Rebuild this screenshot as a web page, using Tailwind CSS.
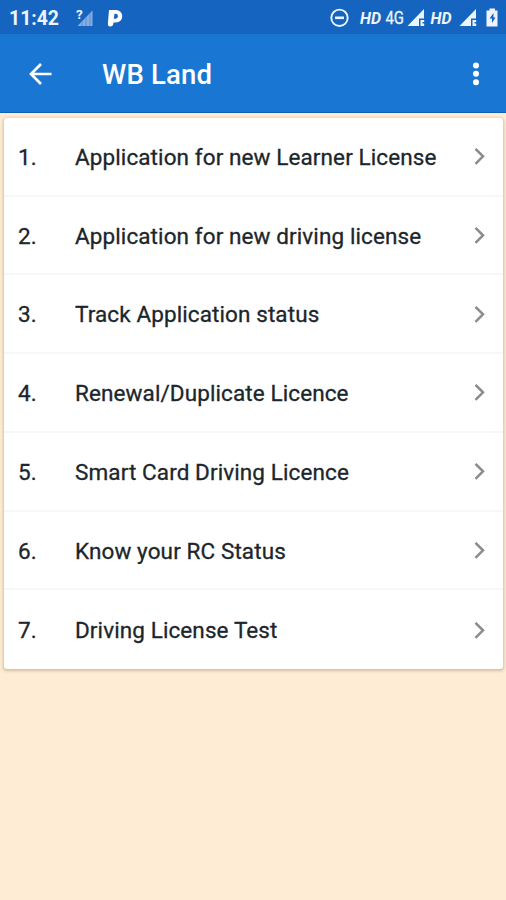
<!DOCTYPE html>
<html lang="en">
<head>
<meta charset="utf-8">
<title>WB Land</title>
<script src="https://cdn.jsdelivr.net/npm/@tailwindcss/browser@4"></script>
</head>
<body class="w-[506px] h-[900px] overflow-hidden bg-[#feecd4] font-[Roboto,sans-serif]">
<div class="h-[34px] bg-[#1565c0] flex items-start text-white">
  <svg class="w-[506px] h-[34px]" viewBox="0 0 506 34" fill="#eef4fd">
    <text x="9" y="25" font-size="19.5" font-weight="700" textLength="50" lengthAdjust="spacingAndGlyphs">11:42</text>
    <path d="M92.500 10.500V26H77.500Z" fill="#86aee0"/>
    <path d="M82 21v5M86 17v9M90 13v13" stroke="#5b8fd2" stroke-width="1"/>
    <text x="76" y="19" font-size="13.500" font-weight="700">?</text>
    <path fill="#fff" fill-rule="evenodd" d="M109 10H116a6 6 0 0 1 0 12.500H113.500c-.3 3-1.300 4-3.300 4-1.700 0-2.500-1-2.300-3L109 10ZM114.500 13.800L113.800 18.700H115.500a2.400 2.400 0 0 0 0-4.900Z"/>
    <circle cx="339.500" cy="17.800" r="8.200" fill="none" stroke="#eef4fd" stroke-width="1.900"/>
    <path d="M335 16.500h9v2.600h-9z"/>
    <text x="360" y="23.500" font-size="16.500" font-weight="700" font-style="italic" textLength="21" lengthAdjust="spacingAndGlyphs">HD</text>
    <text x="385.500" y="23.800" font-size="17.500" stroke="#eef4fd" stroke-width=".3" textLength="18.500" lengthAdjust="spacingAndGlyphs">4G</text>
    <path id="signal" d="M424 9V18.500H419V26H407.500ZM420.500 20h3.700v2h-1.700v1.500h1.700V26h-3.700z"/>
    <text x="430.500" y="23.500" font-size="16.500" font-weight="700" font-style="italic" textLength="21" lengthAdjust="spacingAndGlyphs">HD</text>
    <use href="#signal" x="52"/>
    <path d="M489.500 8.500h5.500v2h2.500v16h-11V10.500h3z"/>
    <path d="M493.500 13l-4 5.500h2.500v4.500l3.500-5.500h-2z" fill="#1565c0"/>
  </svg>
</div>
<header class="h-[79px] bg-[#1976d2] border-b border-[#125fba] flex items-center pl-[28px] pr-[26px] pt-[2px] text-white">
  <svg class="w-[24px] h-[24px]" viewBox="0 0 24 24" fill="none" stroke="#fff" stroke-width="2.700"><path d="M23.500 12H3M13 2L3 12L13 22"/></svg>
  <h1 class="ml-[50px] pt-[1px] text-[27.5px] tracking-[0.2px] leading-[32px] font-medium grow">WB Land</h1>
  <svg class="w-[8px] h-[26px]" viewBox="0 0 8 26" fill="#fff"><circle cx="4" cy="4.500" r="3"/><circle cx="4" cy="12.800" r="3"/><circle cx="4" cy="21.200" r="3"/></svg>
</header>
<main class="mt-[5px] ml-[4px] w-[499px] h-[551px] rounded-[3px] bg-white shadow-[0_1px_3px_1px_rgba(120,90,40,0.3)] grid grid-rows-7 divide-y-2 divide-[#f7f7f7] text-[22.5px] text-[#1c262b] [-webkit-text-stroke:0.3px_#1c262b]" id="list"></main>
<script>
const items = ["Application for new Learner License", "Application for new driving license", "Track Application status", "Renewal/Duplicate Licence", "Smart Card Driving Licence", "Know your RC Status", "Driving License Test"];
document.getElementById("list").innerHTML = items.map((t, i) => `
<div class="flex items-center pl-[14px] pr-[17px]">
  <span class="w-[57px] pt-[3px] tracking-[0.1px]">${i + 1}.</span>
  <span class="grow pt-[3px] whitespace-nowrap tracking-[0.1px]">${t}</span>
  <svg class="w-[13px] h-[18px]" viewBox="0 0 13 18" fill="none" stroke="#8b8b8b" stroke-width="2.500"><path d="M2.500 1.800L10 9.300L2.500 16.800"/></svg>
</div>`).join("");
</script>
</body>
</html>
